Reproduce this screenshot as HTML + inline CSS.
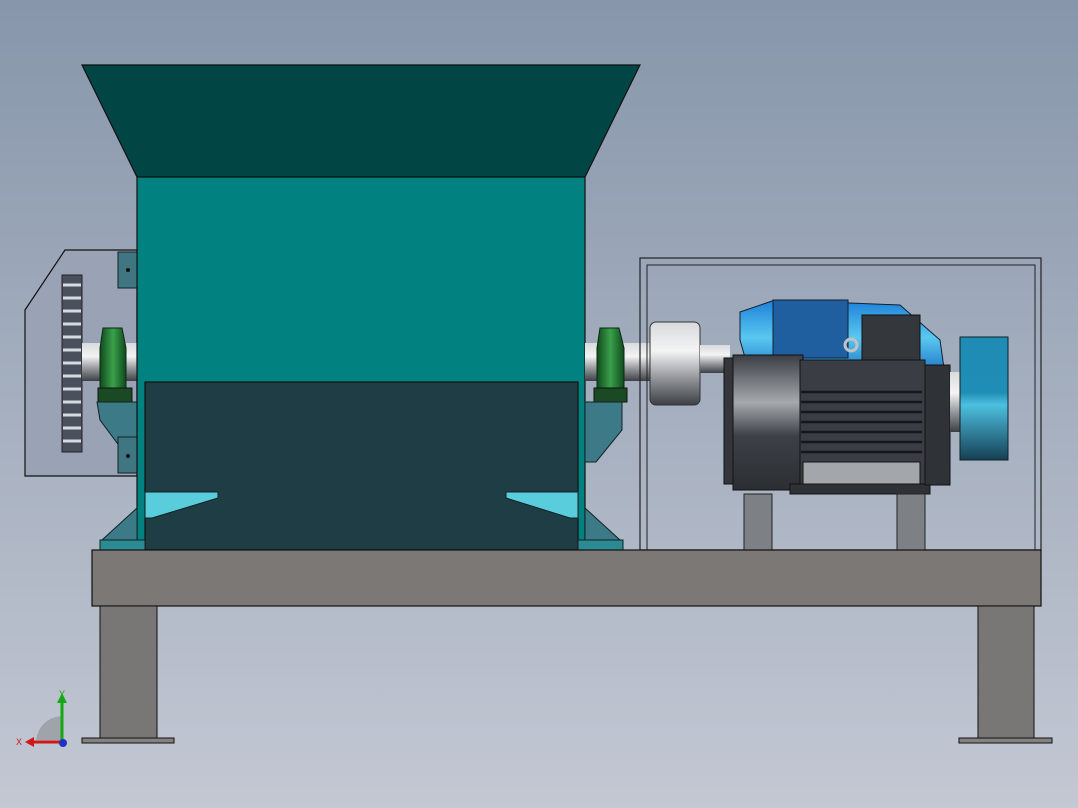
<!DOCTYPE html>
<html><head><meta charset="utf-8"><style>
html,body{margin:0;padding:0;width:1078px;height:808px;overflow:hidden}
svg{display:block}
</style></head><body>
<svg width="1078" height="808" viewBox="0 0 1078 808" xmlns="http://www.w3.org/2000/svg">
<defs>
<linearGradient id="bg" x1="0" y1="0" x2="0" y2="1"><stop offset="0" stop-color="#8796ab"/><stop offset="1" stop-color="#c3c8d3"/></linearGradient>
<linearGradient id="sil" x1="0" y1="0" x2="0" y2="1"><stop offset="0" stop-color="#d8dadc"/><stop offset=".35" stop-color="#f4f4f4"/><stop offset=".7" stop-color="#8c8f94"/><stop offset="1" stop-color="#3c3f44"/></linearGradient>
<linearGradient id="mot" x1="0" y1="0" x2="0" y2="1"><stop offset="0" stop-color="#3a3e44"/><stop offset=".35" stop-color="#a6a9ae"/><stop offset=".6" stop-color="#3d4147"/><stop offset="1" stop-color="#2b2f34"/></linearGradient>
<linearGradient id="fan" x1="0" y1="0" x2="0" y2="1"><stop offset="0" stop-color="#1e8cb4"/><stop offset=".45" stop-color="#1f8db5"/><stop offset=".55" stop-color="#4cc0e0"/><stop offset="1" stop-color="#163f55"/></linearGradient>
<linearGradient id="blu" x1="0" y1="0" x2="0" y2="1"><stop offset="0" stop-color="#1d7fd8"/><stop offset=".5" stop-color="#5ac8f0"/><stop offset="1" stop-color="#1a6fc4"/></linearGradient>
<linearGradient id="grn" x1="0" y1="0" x2="1" y2="0"><stop offset="0" stop-color="#0f4a1e"/><stop offset=".5" stop-color="#3aa04a"/><stop offset="1" stop-color="#0f4a1e"/></linearGradient>
</defs>
<rect width="1078" height="808" fill="url(#bg)"/>
<polygon points="25,310 65,250 137,250 137,476 25,476" fill="#99a3b5" stroke="#111" stroke-width="1.2"/>
<rect x="62" y="275" width="20" height="177" fill="#4a515c" stroke="#222"/>
<g stroke="#d6dbe2" stroke-width="3">
<line x1="63" y1="285" x2="81" y2="285"/><line x1="63" y1="298" x2="81" y2="298"/><line x1="63" y1="311" x2="81" y2="311"/><line x1="63" y1="324" x2="81" y2="324"/><line x1="63" y1="337" x2="81" y2="337"/><line x1="63" y1="350" x2="81" y2="350"/><line x1="63" y1="363" x2="81" y2="363"/><line x1="63" y1="376" x2="81" y2="376"/><line x1="63" y1="389" x2="81" y2="389"/><line x1="63" y1="402" x2="81" y2="402"/><line x1="63" y1="415" x2="81" y2="415"/><line x1="63" y1="428" x2="81" y2="428"/><line x1="63" y1="441" x2="81" y2="441"/>
</g>
<rect x="82" y="343" width="55" height="38" fill="url(#sil)"/>
<path d="M103,328 L122,328 L126,348 L126,388 L100,388 L100,348 Z" fill="url(#grn)" stroke="#0a2a10"/>
<rect x="98" y="388" width="34" height="14" fill="#1a4a24" stroke="#111"/>
<path d="M97,402 L137,402 L137,455 L126,455 L100,420 Z" fill="#3b7a86" stroke="#122"/>
<rect x="118" y="252" width="19" height="36" fill="#3f7682" stroke="#122"/>
<rect x="118" y="437" width="19" height="36" fill="#3f7682" stroke="#122"/>
<circle cx="128" cy="270" r="2" fill="#111"/><circle cx="128" cy="456" r="2" fill="#111"/>
<polygon points="82,65 640,65 585,177 137,177" fill="#014644" stroke="#111" stroke-width="1.2"/>
<rect x="137" y="177" width="448" height="373" fill="#01817f" stroke="#111" stroke-width="1.2"/>
<rect x="145" y="382" width="433" height="168" fill="#1e3d45" stroke="#111" stroke-width="1.2"/>
<polygon points="145,492 218,492 218,498 152,518 145,518" fill="#5acddd" stroke="#122"/>
<polygon points="578,492 506,492 506,498 570,518 578,518" fill="#5acddd" stroke="#122"/>
<polygon points="137,508 137,540 102,540" fill="#3b7a86" stroke="#122"/>
<polygon points="585,508 585,540 620,540" fill="#3b7a86" stroke="#122"/>
<rect x="100" y="540" width="45" height="10" fill="#2c8a92" stroke="#122"/>
<rect x="578" y="540" width="45" height="10" fill="#2c8a92" stroke="#122"/>
<rect x="585" y="343" width="65" height="38" fill="url(#sil)"/>
<path d="M600,328 L619,328 L624,348 L624,388 L597,388 L597,348 Z" fill="url(#grn)" stroke="#0a2a10"/>
<rect x="594" y="388" width="33" height="14" fill="#1a4a24" stroke="#111"/>
<path d="M585,402 L622,402 L622,430 L596,462 L585,462 Z" fill="#3b7a86" stroke="#122"/>
<rect x="640" y="258" width="401" height="292" fill="none" stroke="#222" stroke-width="1.2"/>
<rect x="647" y="265" width="388" height="285" fill="none" stroke="#222" stroke-width="1"/>
<rect x="650" y="322" width="50" height="83" rx="6" fill="url(#sil)" stroke="#333"/>
<rect x="700" y="345" width="30" height="28" fill="url(#sil)"/>
<polygon points="740,312 775,300 900,305 940,340 945,375 750,375 740,340" fill="url(#blu)" stroke="#123"/>
<rect x="773" y="300" width="75" height="58" fill="#1f5fa0" stroke="#123"/>
<rect x="724" y="358" width="12" height="126" fill="#33373c" stroke="#111"/>
<rect x="733" y="355" width="70" height="135" fill="url(#mot)" stroke="#111"/>
<rect x="800" y="360" width="125" height="128" fill="#3a3e44" stroke="#111"/>
<g stroke="#15181b" stroke-width="2.5">
<line x1="801" y1="392" x2="922" y2="392"/><line x1="801" y1="402" x2="922" y2="402"/><line x1="801" y1="412" x2="922" y2="412"/><line x1="801" y1="422" x2="922" y2="422"/><line x1="801" y1="432" x2="922" y2="432"/><line x1="801" y1="442" x2="922" y2="442"/><line x1="801" y1="452" x2="922" y2="452"/></g>
<rect x="803" y="462" width="117" height="22" fill="#a3a6ab" stroke="#111"/>
<rect x="790" y="484" width="140" height="10" fill="#2e3237" stroke="#111"/>
<rect x="862" y="315" width="58" height="45" fill="#34383d" stroke="#111"/>
<circle cx="851" cy="345" r="6" fill="none" stroke="#c0c2c4" stroke-width="3"/>
<rect x="925" y="365" width="25" height="120" fill="#2f3338" stroke="#111"/>
<rect x="950" y="372" width="12" height="60" fill="url(#sil)"/>
<rect x="960" y="337" width="48" height="123" fill="url(#fan)" stroke="#122"/>
<rect x="744" y="494" width="28" height="56" fill="#7d8186" stroke="#222"/>
<rect x="897" y="494" width="28" height="56" fill="#7d8186" stroke="#222"/>
<rect x="92" y="550" width="949" height="56" fill="#7b7876" stroke="#111" stroke-width="1.2"/>
<rect x="100" y="606" width="57" height="132" fill="#787776" stroke="#111"/>
<rect x="82" y="738" width="92" height="5" fill="#858381" stroke="#111"/>
<rect x="978" y="606" width="56" height="132" fill="#787776" stroke="#111"/>
<rect x="959" y="738" width="93" height="5" fill="#858381" stroke="#111"/>
<path d="M36,740 Q40,718 62,716 L62,740 Z" fill="#9fa4ab"/>
<line x1="62" y1="742" x2="62" y2="700" stroke="#14a814" stroke-width="3"/>
<polygon points="57,703 67,703 62,693" fill="#14a814"/>
<line x1="62" y1="742" x2="32" y2="742" stroke="#d01818" stroke-width="3"/>
<polygon points="34,737 34,747 25,742" fill="#d01818"/>
<circle cx="63" cy="743" r="4" fill="#2030c0"/>
<text x="59" y="697" font-family="Liberation Sans, sans-serif" font-size="9" fill="#14a814">Y</text>
<text x="16" y="745" font-family="Liberation Sans, sans-serif" font-size="9" fill="#d01818">X</text>
</svg>
</body></html>
